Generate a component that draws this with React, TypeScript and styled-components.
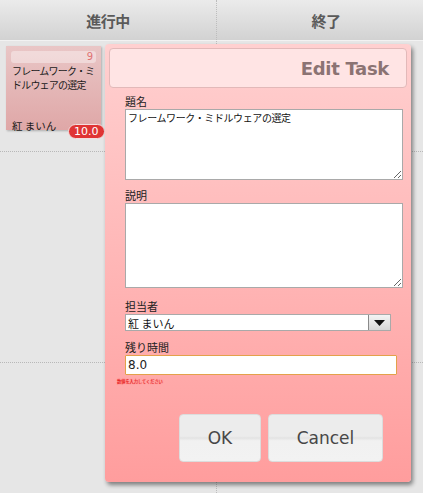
import React from "react";
import styled, { createGlobalStyle } from "styled-components";

const Global = createGlobalStyle`
  html, body { margin: 0; padding: 0; background: #e6e6e6; }
  body { width: 423px; height: 493px; overflow: hidden; font-family: "Noto Sans CJK JP", "DejaVu Sans", sans-serif; }
  #root { position: relative; width: 423px; height: 493px; }
`;

const Board = styled.div`
  position: relative;
  width: 423px;
  height: 493px;
  background: #e6e6e6;
`;

const HeaderRow = styled.div`
  display: grid;
  grid-template-columns: 217px 1fr;
  height: 40px;
  background: linear-gradient(#ebebeb, #d2d2d2);
  border-bottom: 1px solid #f2f2f2;
`;

const HeaderCell = styled.div<{ $shift?: number; $last?: boolean }>`
  display: flex;
  align-items: center;
  justify-content: center;
  padding-left: ${(p) => (p.$shift ?? 0)}px;
  border-right: ${(p) => (p.$last ? "none" : "1px dotted #bdbdbd")};
  font-family: "Noto Sans CJK JP", sans-serif;
  font-weight: 700;
  font-size: 15px;
  color: #5a5a5a;
  letter-spacing: -0.5px;
`;

const Body = styled.div`
  display: grid;
  grid-template-columns: 217px 1fr;
  grid-template-rows: 111px 211px 1fr;
  height: 452px;
`;

const Cell = styled.div<{ $last?: boolean; $bottom?: boolean }>`
  position: relative;
  border-right: ${(p) => (p.$last ? "none" : "1px dotted #bdbdbd")};
  border-bottom: ${(p) => (p.$bottom ? "none" : "1px dotted #b8b8b8")};
  padding: 5px 0 0 6px;
`;

const Card = styled.div`
  position: relative;
  width: 95px;
  height: 84px;
  display: flex;
  flex-direction: column;
  box-sizing: border-box;
  padding: 5px 5px 0 5px;
  background: linear-gradient(#e9c6c6, #dfa7a7);
  box-shadow: 1px 1px 2px rgba(0, 0, 0, 0.25);
`;

const CardTop = styled.div`
  height: 12px;
  border-radius: 3px;
  background: rgba(255, 255, 255, 0.38);
  font-family: "DejaVu Sans", sans-serif;
  font-size: 10px;
  line-height: 12px;
  color: #e07272;
  text-align: right;
  padding-right: 3px;
`;

const CardTitle = styled.div`
  margin-top: 1px;
  padding-left: 1px;
  font-size: 10px;
  line-height: 14px;
  color: #1a1a1a;
  letter-spacing: -0.8px;
  line-break: anywhere;
  word-break: break-all;
`;

const CardOwner = styled.div`
  margin-top: auto;
  margin-bottom: -2px;
  padding-left: 1px;
  font-size: 10.5px;
  line-height: 12px;
  color: #1a1a1a;
`;

const Badge = styled.div`
  position: absolute;
  left: 62px;
  top: 78px;
  height: 13px;
  padding: 0 5px;
  border: 1px solid #f4dede;
  border-radius: 8px;
  background: #e03434;
  color: #fff;
  font-family: "DejaVu Sans", sans-serif;
  font-size: 11px;
  line-height: 13px;
`;

const Dialog = styled.div`
  position: absolute;
  left: 105px;
  top: 44px;
  width: 306px;
  height: 438px;
  box-sizing: border-box;
  padding: 4px;
  border-radius: 4px;
  background: linear-gradient(#ffd0d0, #ff9d9d);
  box-shadow: 2px 3px 4px rgba(0, 0, 0, 0.45);
  display: flex;
  flex-direction: column;
`;

const TitleBox = styled.div`
  height: 40px;
  box-sizing: border-box;
  border: 1px solid #e2b9b9;
  border-radius: 4px;
  background: #ffe4e4;
  display: flex;
  align-items: center;
  justify-content: flex-end;
  padding-right: 17px;
  font-family: "DejaVu Sans", sans-serif;
  font-weight: 700;
  font-size: 18px;
  letter-spacing: -0.3px;
  color: #8b7373;
`;

const Form = styled.div`
  display: flex;
  flex-direction: column;
  padding: 6px 4px 0 16px;
`;

const Label = styled.label<{ $top?: number }>`
  display: block;
  margin-top: ${(p) => p.$top ?? 0}px;
  font-size: 11px;
  line-height: 15px;
  color: #222;
`;

const TextArea = styled.textarea<{ $h: number }>`
  display: block;
  box-sizing: border-box;
  width: 278px;
  height: ${(p) => p.$h}px;
  margin: 0;
  padding: 1px 2px;
  border: 1px solid #a9a9a9;
  background: #fff;
  font-family: "Noto Sans CJK JP", sans-serif;
  font-size: 10px;
  line-height: 14px;
  letter-spacing: -0.4px;
  color: #111;
  outline: none;
`;

const SelectBox = styled.div`
  display: flex;
  width: 266px;
  height: 17px;
  box-sizing: border-box;
  border: 1px solid #a9a9a9;
  background: #fff;
`;

const Select = styled.select`
  flex: 1;
  appearance: none;
  border: none;
  background: transparent;
  padding: 0 2px;
  margin: 0;
  font-family: "Noto Sans CJK JP", sans-serif;
  font-size: 11px;
  color: #111;
  outline: none;
`;

const Arrow = styled.div`
  width: 21px;
  border-left: 1px solid #8a8a8a;
  background: linear-gradient(#f4f4f4, #d6d6d6);
  display: flex;
  align-items: center;
  justify-content: center;
`;

const NumInput = styled.input`
  display: block;
  box-sizing: border-box;
  width: 272px;
  height: 20px;
  margin: 0;
  padding: 0 2px;
  border: 1px solid #e3a14a;
  border-radius: 1px;
  background: #fff;
  font-family: "DejaVu Sans", sans-serif;
  font-size: 12px;
  color: #222;
  outline: none;
`;

const ErrorText = styled.div`
  margin: 3px 0 0 -8px;
  font-size: 4.2px;
  line-height: 6px;
  color: #e01818;
  text-shadow: 0 0 1px #ff2a2a;
  white-space: nowrap;
`;

const Buttons = styled.div`
  display: flex;
  justify-content: flex-end;
  gap: 7px;
  margin-top: auto;
  padding: 0 24px 16px 0;
`;

const Button = styled.button<{ $w: number }>`
  width: ${(p) => p.$w}px;
  height: 48px;
  box-sizing: border-box;
  border: 1px solid #dcdcdc;
  border-radius: 4px;
  background: linear-gradient(#ececec 0%, #ececec 46%, #e3e3e3 50%, #f1f1f1 56%, #f2f2f2 100%);
  font-family: "DejaVu Sans", sans-serif;
  font-size: 17px;
  color: #474747;
  padding: 0;
`;

export default function App() {
  return (
    <>
      <Global />
      <Board>
        <HeaderRow>
          <HeaderCell $shift={-4}>進行中</HeaderCell>
          <HeaderCell $shift={12} $last>終了</HeaderCell>
        </HeaderRow>
        <Body>
          <Cell>
            <Card>
              <CardTop>9</CardTop>
              <CardTitle>フレームワーク・ミドルウェアの選定</CardTitle>
              <CardOwner>紅 まいん</CardOwner>
              <Badge>10.0</Badge>
            </Card>
          </Cell>
          <Cell $last />
          <Cell />
          <Cell $last />
          <Cell $bottom />
          <Cell $last $bottom />
        </Body>
        <Dialog>
          <TitleBox>Edit Task</TitleBox>
          <Form>
            <Label>題名</Label>
            <TextArea $h={71} defaultValue="フレームワーク・ミドルウェアの選定" />
            <Label $top={8}>説明</Label>
            <TextArea $h={85} defaultValue="" />
            <Label $top={11}>担当者</Label>
            <SelectBox>
              <Select defaultValue="mine">
                <option value="mine">紅 まいん</option>
              </Select>
              <Arrow>
                <svg width="11" height="6" viewBox="0 0 11 6">
                  <path d="M0 0 H11 L5.5 6 Z" fill="#111" />
                </svg>
              </Arrow>
            </SelectBox>
            <Label $top={9}>残り時間</Label>
            <NumInput defaultValue="8.0" />
            <ErrorText>数値を入力してください</ErrorText>
          </Form>
          <Buttons>
            <Button $w={82}>OK</Button>
            <Button $w={115}>Cancel</Button>
          </Buttons>
        </Dialog>
      </Board>
    </>
  );
}
